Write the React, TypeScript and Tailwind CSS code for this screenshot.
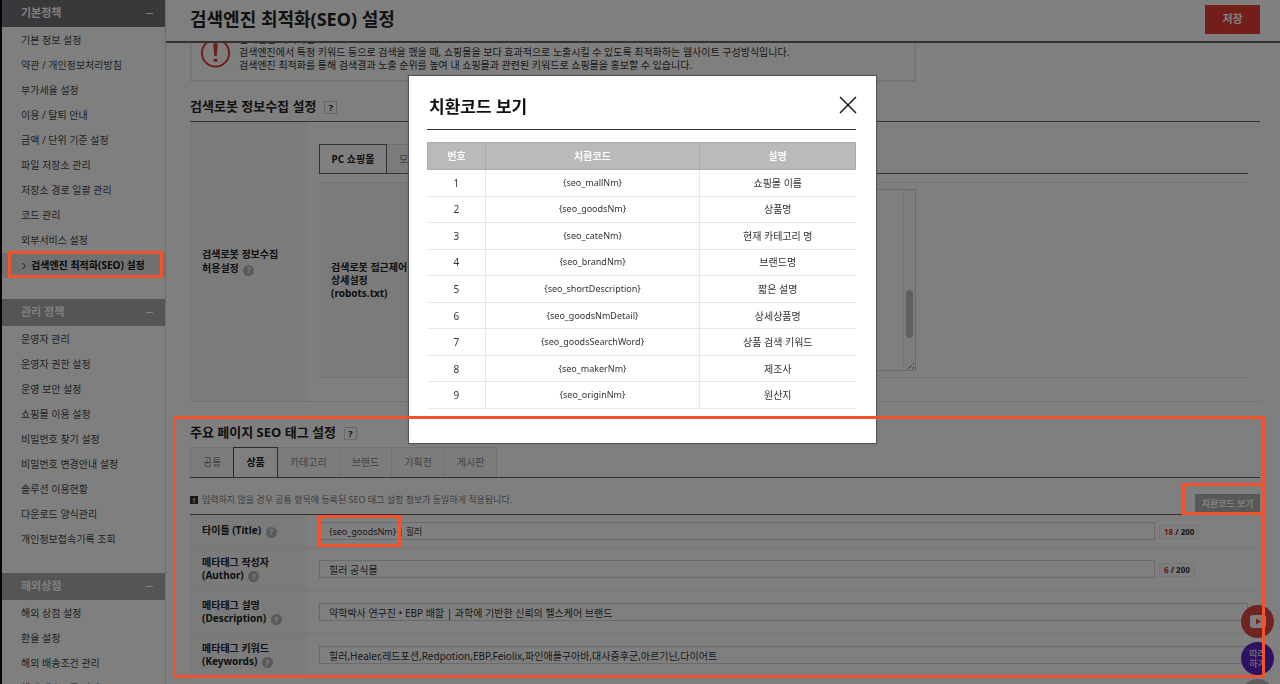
import { useState } from 'react';
import clsx from 'clsx';

const MENU_GROUPS = [
  {
    title: '기본정책',
    items: [
      '기본 정보 설정',
      '약관 / 개인정보처리방침',
      '부가세율 설정',
      '이용 / 탈퇴 안내',
      '금액 / 단위 기준 설정',
      '파일 저장소 관리',
      '저장소 경로 일괄 관리',
      '코드 관리',
      '외부서비스 설정',
      '검색엔진 최적화(SEO) 설정',
    ],
  },
  {
    title: '관리 정책',
    items: [
      '운영자 관리',
      '운영자 권한 설정',
      '운영 보안 설정',
      '쇼핑몰 이용 설정',
      '비밀번호 찾기 설정',
      '비밀번호 변경안내 설정',
      '솔루션 이용현황',
      '다운로드 양식관리',
      '개인정보접속기록 조회',
    ],
  },
  {
    title: '해외상점',
    items: ['해외 상점 설정', '환율 설정', '해외 배송조건 관리', '해외 배송그룹 관리'],
  },
];

const ACTIVE_ITEM = '검색엔진 최적화(SEO) 설정';

const PAGE_TABS = ['공통', '상품', '카테고리', '브랜드', '기획전', '게시판'];

const CODES = [
  ['{seo_mallNm}', '쇼핑몰 이름'],
  ['{seo_goodsNm}', '상품명'],
  ['{seo_cateNm}', '현재 카테고리 명'],
  ['{seo_brandNm}', '브랜드명'],
  ['{seo_shortDescription}', '짧은 설명'],
  ['{seo_goodsNmDetail}', '상세상품명'],
  ['{seo_goodsSearchWord}', '상품 검색 키워드'],
  ['{seo_makerNm}', '제조사'],
  ['{seo_originNm}', '원산지'],
];

const META_ROWS = [
  { id: 'title', label: '타이틀', sub: '(Title)', value: '{seo_goodsNm} | 힐러', count: 18 },
  { id: 'author', label: '메타태그 작성자', sub: '(Author)', value: '힐러 공식몰', count: 6 },
  {
    id: 'description',
    label: '메타태그 설명',
    sub: '(Description)',
    value: '약학박사 연구진 • EBP 배합 | 과학에 기반한 신뢰의 헬스케어 브랜드',
  },
  {
    id: 'keywords',
    label: '메타태그 키워드',
    sub: '(Keywords)',
    value: '힐러,Healer,레드포션,Redpotion,EBP,Feiolix,파인애플구아바,대사증후군,아르기닌,다이어트',
  },
];

const HelpDot = () => (
  <button
    type="button"
    aria-label="도움말"
    className="ml-[2px] inline-flex size-[11px] items-center justify-center rounded-full bg-[#b4b4b4] align-[-1px] text-[8px] font-bold leading-none text-white"
  >
    ?
  </button>
);

const HelpBox = () => (
  <button
    type="button"
    aria-label="도움말"
    className="flex size-[13px] items-center justify-center border border-[#d0d0d0] text-[9px] font-bold leading-none text-[#222]"
  >
    ?
  </button>
);

const Sidebar = () => (
  <aside className="flex w-[166px] shrink-0 border-r border-[#dcdcdc]">
    <div className="w-[2px] shrink-0 bg-[#0a0a1c]" />
    <nav className="min-w-0 flex-1">
      {MENU_GROUPS.map((group, index) => (
        <section key={group.title} className="pb-[21px]">
          <h2
            className={clsx(
              'flex h-[27px] items-center justify-between pr-3 pl-[19px] text-[11px] font-bold text-white',
              index === 0 ? 'bg-[#707276]' : 'bg-[#aaaaaa]',
            )}
          >
            {group.title}
            <span className="h-px w-[7px] bg-white" />
          </h2>
          <ul className="pt-px">
            {group.items.map((item) => (
              <li key={item}>
                <a
                  href="#"
                  className={clsx(
                    'flex h-[25px] items-center whitespace-nowrap pl-[19px] text-[10px]',
                    item === ACTIVE_ITEM ? 'bg-[#e3e3e3] font-bold text-[#111]' : 'text-[#444]',
                  )}
                >
                  {item === ACTIVE_ITEM && (
                    <svg className="mr-1 shrink-0" width="6" height="8" viewBox="0 0 6 8" fill="none" stroke="#333">
                      <path d="M1.5 1 4.5 4 1.5 7" />
                    </svg>
                  )}
                  {item}
                </a>
              </li>
            ))}
          </ul>
        </section>
      ))}
    </nav>
  </aside>
);

const Notice = () => (
  <div className="-mt-[21px] mr-[344px] flex h-[60px] gap-2 border-2 border-[#ececec] pl-2">
    <svg className="mt-[13px] shrink-0" width="31" height="32" viewBox="0 0 32 32" fill="none">
      <circle cx="16" cy="16" r="14" stroke="#e03a34" strokeWidth="2" />
      <path d="M13.6 6h4.8l-1.1 13h-2.6z" fill="#e03a34" />
      <rect x="14" y="22" width="4" height="3" fill="#e03a34" />
    </svg>
    <p className="mt-[9px] text-[10px] leading-[13px] text-[#333]">
      검색엔진 최적화란?
      <br />
      검색엔진에서 특정 키워드 등으로 검색을 했을 때, 쇼핑몰을 보다 효과적으로 노출시킬 수 있도록 최적화하는 웹사이트
      구성방식입니다.
      <br />
      검색엔진 최적화를 통해 검색결과 노출 순위를 높여 내 쇼핑몰과 관련된 키워드로 쇼핑몰을 홍보할 수 있습니다.
    </p>
  </div>
);

const RobotSection = () => (
  <section>
    <div className="mt-[15px] flex h-5 items-center gap-2">
      <h2 className="text-[13px] font-bold text-[#222]">검색로봇 정보수집 설정</h2>
      <HelpBox />
    </div>
    <div className="mt-1 flex h-[281px] border-t border-b border-t-[#666] border-b-[#e4e4e4]">
      <div className="flex w-[117px] shrink-0 items-center bg-[#f6f6f6] pl-3 text-[10px] font-bold leading-[14px] text-[#222]">
        <div>
          검색로봇 정보수집
          <br />
          허용설정 <HelpDot />
        </div>
      </div>
      <div className="flex-1 px-3 pt-[22px]">
        <div className="flex h-[30px] border-b border-[#666] text-[10px]">
          <button type="button" className="w-[68px] border-x border-t border-[#666] font-bold text-[#222]">
            PC 쇼핑몰
          </button>
          <button type="button" className="border-t border-r border-[#e0e0e0] bg-[#f6f6f6] px-3 text-[#888]">
            모바일 쇼핑몰
          </button>
        </div>
        <div className="mt-2 flex h-[196px] border-y border-[#e4e4e4]">
          <label
            htmlFor="robots"
            className="flex w-[117px] shrink-0 items-center bg-[#f6f6f6] pl-3 text-[10px] font-bold leading-[13px] text-[#222]"
          >
            <span>
              검색로봇 접근제어
              <br />
              상세설정
              <br />
              (robots.txt)
            </span>
          </label>
          <div className="my-[6px] mr-[332px] ml-3 flex flex-1 border border-[#d4d4d4]">
            <textarea id="robots" className="min-w-0 flex-1 resize-none outline-none" />
            <div className="flex w-3 flex-col items-center justify-end border-l border-[#e8e8e8] bg-[#fafafa]">
              <div className="mb-5 h-12 w-[7px] rounded-full bg-[#c1c1c1]" />
              <svg width="11" height="12" viewBox="0 0 11 12" stroke="#444" strokeDasharray="1 .6">
                <path d="M4 11 10 5M8 11 10 9" />
              </svg>
            </div>
          </div>
        </div>
      </div>
    </div>
  </section>
);

const MetaSection = ({ onShowCodes }: { onShowCodes: () => void }) => {
  const [tab, setTab] = useState('상품');

  return (
    <section className="mt-[21px]">
      <div className="flex h-5 items-center gap-2">
        <h2 className="text-[13px] font-bold text-[#222]">주요 페이지 SEO 태그 설정</h2>
        <HelpBox />
      </div>
      <div className="mt-1 flex h-[31px] border-b border-[#666]">
        {PAGE_TABS.map((name) => (
          <button
            key={name}
            type="button"
            onClick={() => setTab(name)}
            className={clsx(
              'border-t border-r px-3 text-[10px]',
              name === tab
                ? '-ml-px border-l border-[#555] bg-white font-bold text-[#111]'
                : 'border-[#e4e4e4] bg-[#f8f8f8] text-[#888] first:border-l',
            )}
          >
            {name}
          </button>
        ))}
      </div>
      <div className="flex h-9 items-end justify-between">
        <p className="flex h-7 items-center gap-1 text-[9px] text-[#777]">
          <span className="flex size-2 items-center justify-center bg-[#333] text-[7px] font-bold leading-none text-white">
            !
          </span>
          입력하지 않을 경우 공통 항목에 등록된 SEO 태그 설정 정보가 동일하게 적용됩니다.
        </p>
        <button
          type="button"
          onClick={onShowCodes}
          className="h-5 w-[65px] whitespace-nowrap bg-[#b0b0b0] text-[9px] font-bold text-white"
        >
          치환코드 보기
        </button>
      </div>
      <table className="w-full border-t border-[#666] text-left text-[10px]">
        <tbody>
          {META_ROWS.map((row) => (
            <tr key={row.id} className="border-b border-[#ececec]">
              <th
                className={clsx(
                  'w-[117px] bg-[#f6f6f6] pl-3 font-bold leading-[13px] text-[#222]',
                  row.id === 'title' ? 'h-[33px]' : 'h-[43px]',
                )}
              >
                <label htmlFor={row.id}>
                  {row.label}
                  {row.id === 'title' ? ' ' : <br />}
                  {row.sub}
                </label>{' '}
                <HelpDot />
              </th>
              <td className="px-3">
                <div className="flex items-center gap-1">
                  <input
                    id={row.id}
                    defaultValue={row.value}
                    className={clsx(
                      'h-[18px] min-w-0 flex-1 border border-[#d4d4d4] px-[9px] text-[#333]',
                      row.id === 'title' && 'text-[9px]',
                    )}
                  />
                  {row.count !== undefined && (
                    <div className="w-[89px]">
                      <span className="inline-block border border-[#ececec] bg-[#fafafa] px-1 text-[8px] font-bold leading-3 text-[#333]">
                        <span className="text-[#dd3830]">{row.count}</span> / 200
                      </span>
                    </div>
                  )}
                </div>
              </td>
            </tr>
          ))}
        </tbody>
      </table>
    </section>
  );
};

const CodeDialog = ({ onClose }: { onClose: () => void }) => (
  <div
    role="dialog"
    aria-label="치환코드 보기"
    className="fixed top-[76px] left-1/2 z-30 h-[367px] w-[467px] -translate-x-[231px] bg-white pt-4 pr-5 pl-[18px] shadow-[0_0_1px_1px_#555]"
  >
    <div className="flex h-[38px] items-start justify-between border-b border-[#333] pl-[2px]">
      <h2 className="pt-[3px] text-[17px] font-bold leading-6 text-[#111]">치환코드 보기</h2>
      <button type="button" aria-label="닫기" onClick={onClose} className="mt-1 -mr-px">
        <svg width="18" height="18" viewBox="0 0 18 18" fill="none" stroke="#111" strokeWidth="1.4">
          <path d="M1 1 17 17M17 1 1 17" />
        </svg>
      </button>
    </div>
    <table className="mt-3 h-[267px] w-full border-collapse text-center text-[10px] leading-[14px] text-[#333]">
      <thead>
        <tr className="h-[27px] border border-[#aaa] bg-[#bababa] text-white">
          <th className="w-[58px] border-r border-[#aaa]">번호</th>
          <th className="w-[214px] border-r border-[#aaa]">치환코드</th>
          <th>설명</th>
        </tr>
      </thead>
      <tbody>
        {CODES.map(([code, description], index) => (
          <tr key={code} className="border-b border-[#e6e6e6]">
            <td className="border-r border-[#e6e6e6]">{index + 1}</td>
            <td className="border-r border-[#e6e6e6] text-[9px]">{code}</td>
            <td>{description}</td>
          </tr>
        ))}
      </tbody>
    </table>
  </div>
);

const FloatingButtons = () => (
  <div className="fixed right-[6px] bottom-[-28px] z-10 flex flex-col gap-1">
    <button type="button" aria-label="동영상" className="flex size-[33px] items-center justify-center rounded-full bg-[#e04a4a]">
      <svg width="16" height="13" viewBox="0 0 16 13">
        <rect width="16" height="13" rx="3" fill="#fff" />
        <path d="M6 3.5v6l5-3z" fill="#e04a4a" />
      </svg>
    </button>
    <button
      type="button"
      className="flex size-[33px] items-center justify-center rounded-full bg-[#5a22c8] text-[9px] leading-[10px] text-white"
    >
      따라
      <br />
      하기
    </button>
    <button type="button" aria-label="맨 위로" className="size-[33px] rounded-full bg-[#bbb]" />
  </div>
);

/** Guide frames drawn above the dimmed screen */
const Highlights = () => (
  <div className="pointer-events-none fixed inset-0 z-40">
    <div className="absolute top-[251px] left-2 h-[27px] w-[155px] border-3 border-[#f1532d]" />
    <div className="absolute top-[416px] right-[15px] left-[173px] h-[262px] border-3 border-[#f1532d]" />
    <div className="absolute top-[515px] left-[318px] h-8 w-[83px] border-3 border-[#f1532d]" />
    <div className="absolute top-[483px] right-[15px] h-8 w-[83px] border-3 border-[#f1532d]" />
  </div>
);

export default function App() {
  const [dialogOpen, setDialogOpen] = useState(true);

  return (
    <div className="flex h-screen overflow-hidden bg-white font-['Noto_Sans','Noto_Sans_CJK_KR',sans-serif]">
      <Sidebar />
      <div className="flex min-w-0 flex-1 flex-col">
        <header className="flex h-[43px] shrink-0 items-center justify-between border-b-2 border-[#666] pr-5 pb-[2px] pl-6">
          <h1 className="text-[18px] font-bold text-[#222]">검색엔진 최적화(SEO) 설정</h1>
          <button type="button" className="h-[29px] w-[55px] bg-[#e83c32] text-[11px] font-bold text-white">
            저장
          </button>
        </header>
        <main className="min-h-0 flex-1 overflow-hidden pr-5 pl-6">
          <Notice />
          <RobotSection />
          <MetaSection onShowCodes={() => setDialogOpen(true)} />
        </main>
      </div>
      <FloatingButtons />
      {dialogOpen && <div className="fixed inset-0 z-20 bg-black/50" />}
      {dialogOpen && <CodeDialog onClose={() => setDialogOpen(false)} />}
      <Highlights />
    </div>
  );
}
